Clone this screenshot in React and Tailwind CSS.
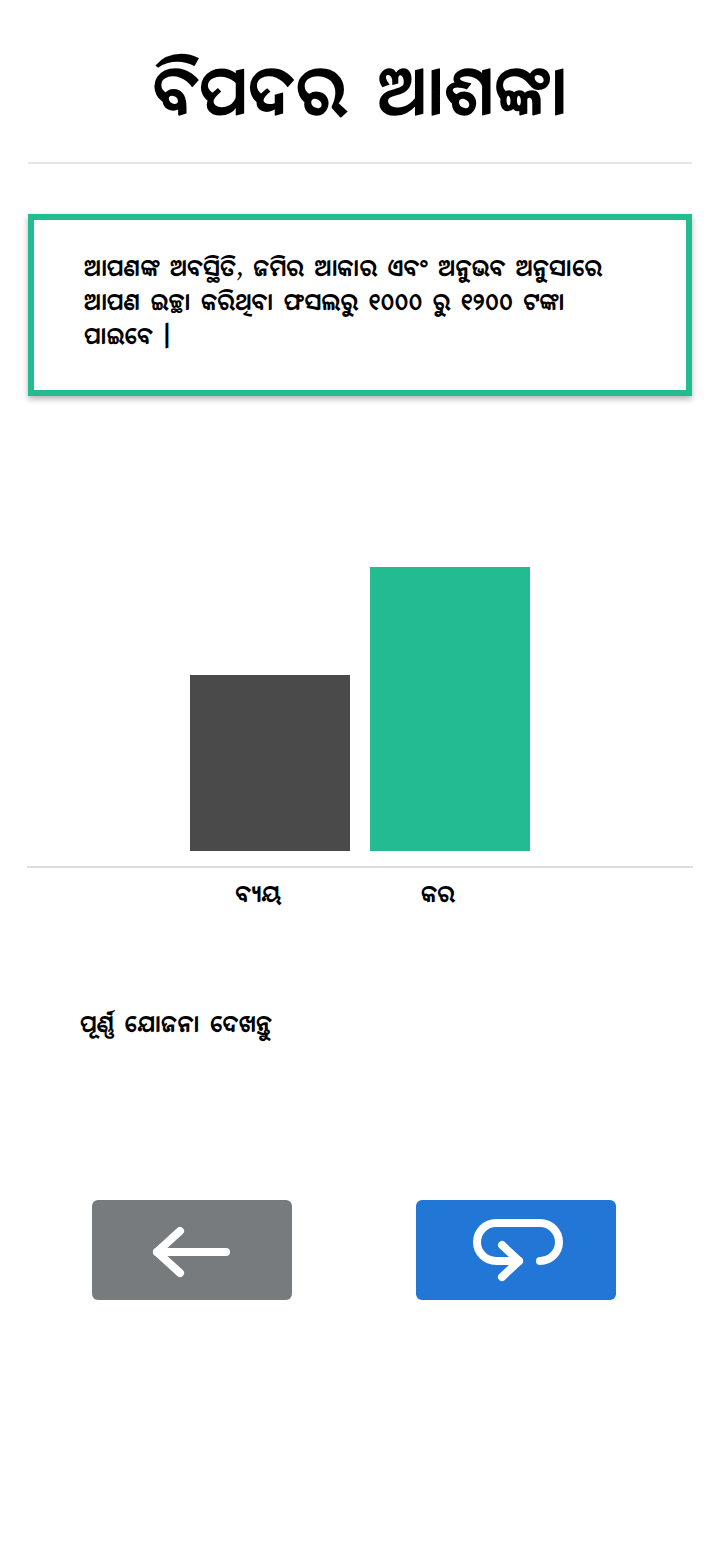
import React from "react";

export default function App() {
  return (
    <div className="min-h-[1544px] w-[720px] bg-white font-['Noto_Serif_Oriya',serif] text-black">
      <div className="px-[28px]">
        <h1 className="pt-[60px] text-center text-[70px] font-bold leading-[80px]">
          ବିପଦର ଆଶଙ୍କା
        </h1>
        <div className="mt-[22px] h-[2px] bg-[#e6e6e6]" />
        <div className="mt-[50px] border-[6px] border-[#23bc91] bg-white px-[50px] py-[34px] shadow-[0_3px_6px_rgba(0,0,0,0.3)]">
          <p className="text-[24px] font-bold leading-[34px]">
            ଆପଣଙ୍କ ଅବସ୍ଥିତି, ଜମିର ଆକାର ଏବଂ ଅନୁଭବ ଅନୁସାରେ ଆପଣ ଇଚ୍ଛା କରିଥିବା ଫସଲରୁ ୧୦୦୦ ରୁ ୧୨୦୦ ଟଙ୍କା ପାଇବେ ।
          </p>
        </div>
      </div>

      <div className="mt-[35px] flex h-[420px] items-end justify-center gap-[20px]">
        <div className="h-[176px] w-[160px] bg-[#4a4a4a]" />
        <div className="h-[284px] w-[160px] bg-[#23bc91]" />
      </div>
      <div className="mx-[27px] mt-[15px] h-[2px] bg-[#dddddd]" />
      <div className="mt-[14px] flex justify-center gap-[20px] text-[24px] font-bold leading-[30px]">
        <div className="w-[160px] pr-[24px] text-center">ବ୍ୟୟ</div>
        <div className="w-[160px] pr-[24px] text-center">କର</div>
      </div>

      <div className="mt-[100px] pl-[80px] text-[24px] font-bold leading-[30px]">
        ପୂର୍ଣ୍ଣ ଯୋଜନା ଦେଖନ୍ତୁ
      </div>

      <div className="mt-[158px] flex gap-[124px] pl-[92px]">
        <button className="h-[100px] w-[200px] rounded-[6px] bg-[#787b7e]">
          <svg width="200" height="100" viewBox="0 0 200 100" fill="none" stroke="white" strokeWidth="8" strokeLinecap="round" strokeLinejoin="round">
            <path d="M65 52 H134" />
            <path d="M88 31 L65 52 L88 73" />
          </svg>
        </button>
        <button className="h-[100px] w-[200px] rounded-[6px] bg-[#2276d5]">
          <svg width="200" height="100" viewBox="0 0 200 100" fill="none" stroke="white" strokeWidth="8" strokeLinecap="round" strokeLinejoin="round">
            <path d="M124 61 A19 19 0 0 0 124 23 H80 A19 19 0 0 0 80 61 H103" />
            <path d="M86 45 L103 61 L86 77" />
          </svg>
        </button>
      </div>
    </div>
  );
}
